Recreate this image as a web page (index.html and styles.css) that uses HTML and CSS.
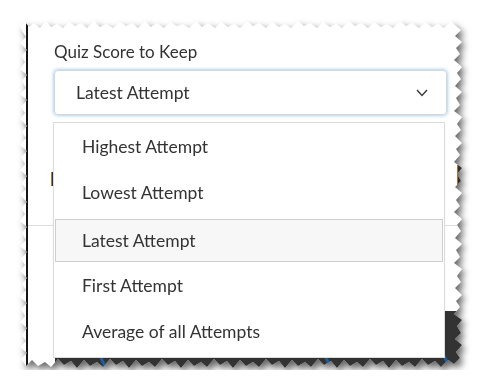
FILE: index.html
```html
<!DOCTYPE html>
<html>
<head>
<meta charset="utf-8">
<link rel="stylesheet" href="styles.css">
</head>
<body>
<div class="shadow">
  <div class="sheet">
    <div class="panel">
      <div class="field">
        <div class="label">Quiz Score to Keep</div>
        <div class="select">
          <span>Latest Attempt</span>
          <svg class="chev" width="12" height="8" viewBox="0 0 12 8"><polyline points="1,1 6,6.5 11,1" fill="none" stroke="#3a3a3a" stroke-width="1.4"/></svg>
        </div>
        <ul class="menu">
          <li>Highest Attempt</li>
          <li>Lowest Attempt</li>
          <li class="active">Latest Attempt</li>
          <li>First Attempt</li>
          <li>Average of all Attempts</li>
        </ul>
      </div>
      <div class="behind-row">
        <span class="peek-letter"></span>
        <span class="peek-button"></span>
      </div>
      <div class="sep"></div>
      <div class="spacer"></div>
      <div class="dark">
        <span class="streak s1"></span>
        <span class="streak s2"></span>
        <span class="streak s3"></span>
      </div>
    </div>
  </div>
</div>
</body>
</html>
```

FILE: styles.css
```css
html, body {
  margin: 0;
  padding: 0;
  background: #ffffff;
}
body {
  font-family: Lato, "Open Sans", sans-serif;
  color: #333333;
}
.shadow {
  padding: 20px 0 0 20px;
  width: 444px;
  filter: drop-shadow(3px 4px 3.5px rgba(0, 0, 0, 0.6));
}
.sheet {
  width: 444px;
  height: 350px;
  background: #ffffff;
  clip-path: polygon(
    0px 6px, 5px 2px, 9px 7px, 14px 3px, 20px 8px, 26px 1px, 31px 7px, 37px 4px, 43px 8px, 49px 2px, 55px 6px, 61px 3px, 67px 8px, 74px 1px, 80px 7px, 86px 4px, 93px 8px, 100px 2px, 106px 6px, 112px 3px, 118px 8px, 125px 1px, 131px 7px, 137px 3px, 144px 8px, 150px 2px, 157px 6px, 163px 4px, 169px 8px, 176px 1px, 182px 7px, 188px 3px, 195px 8px, 201px 2px, 208px 7px, 214px 4px, 220px 8px, 227px 1px, 233px 6px, 239px 3px, 246px 8px, 252px 2px, 259px 7px, 265px 4px, 271px 8px, 278px 1px, 284px 6px, 290px 3px, 297px 8px, 303px 2px, 310px 7px, 316px 4px, 322px 8px, 329px 1px, 335px 6px, 341px 3px, 348px 8px, 354px 2px, 361px 7px, 367px 4px, 373px 8px, 380px 1px, 386px 6px, 392px 3px, 399px 8px, 405px 2px, 412px 7px, 418px 4px, 424px 8px, 431px 1px, 436px 6px,
    441px 10px, 435px 16px, 442px 22px, 436px 28px, 440px 34px, 434px 40px, 442px 47px, 437px 53px, 441px 59px, 435px 66px, 442px 72px, 436px 78px, 440px 85px, 434px 91px, 442px 97px, 437px 104px, 441px 110px, 435px 116px, 442px 123px, 436px 129px, 440px 135px, 434px 142px, 442px 148px, 437px 154px, 441px 161px, 435px 167px, 442px 173px, 436px 180px, 440px 186px, 434px 192px, 442px 199px, 437px 205px, 441px 211px, 435px 218px, 442px 224px, 436px 230px, 440px 237px, 434px 243px, 442px 249px, 437px 256px, 441px 262px, 435px 268px, 442px 275px, 436px 281px, 440px 287px, 434px 294px, 442px 300px, 437px 306px, 441px 313px, 435px 319px, 442px 325px, 436px 332px, 440px 338px,
    434px 344px, 428px 340px, 421px 347px, 415px 341px, 408px 345px, 402px 339px, 395px 347px, 389px 342px, 382px 346px, 376px 340px, 369px 348px, 363px 341px, 356px 345px, 350px 339px, 343px 347px, 337px 342px, 330px 346px, 324px 340px, 317px 348px, 311px 341px, 304px 345px, 298px 339px, 291px 347px, 285px 342px, 278px 346px, 272px 340px, 265px 348px, 259px 341px, 252px 345px, 246px 339px, 239px 347px, 233px 342px, 226px 346px, 220px 340px, 213px 348px, 207px 341px, 200px 345px, 194px 339px, 187px 347px, 181px 342px, 174px 346px, 168px 340px, 161px 348px, 155px 341px, 148px 345px, 142px 339px, 135px 347px, 129px 342px, 122px 346px, 116px 340px, 109px 348px, 103px 341px, 96px 345px, 90px 339px, 83px 347px, 77px 342px, 70px 346px, 64px 340px, 57px 348px, 51px 341px, 44px 345px, 38px 339px, 31px 347px, 25px 342px, 18px 346px, 12px 340px, 6px 346px,
    1px 339px, 7px 333px, 0px 327px, 6px 321px, 2px 315px, 7px 308px, 0px 302px, 5px 296px, 1px 289px, 7px 283px, 0px 277px, 6px 270px, 2px 264px, 7px 258px, 0px 251px, 5px 245px, 1px 239px, 7px 232px, 0px 226px, 6px 220px, 2px 213px, 7px 207px, 0px 201px, 5px 194px, 1px 188px, 7px 182px, 0px 175px, 6px 169px, 2px 163px, 7px 156px, 0px 150px, 5px 144px, 1px 137px, 7px 131px, 0px 125px, 6px 118px, 2px 112px, 7px 106px, 0px 99px, 5px 93px, 1px 87px, 7px 80px, 0px 74px, 6px 68px, 2px 61px, 7px 55px, 0px 49px, 5px 42px, 1px 36px, 7px 30px, 0px 23px, 6px 17px, 2px 11px
  );
}
.panel {
  margin-left: 6px;
  height: 350px;
  border-left: 2px solid #151515;
  display: flex;
  flex-direction: column;
  box-sizing: border-box;
}
.field {
  position: relative;
  padding: 22px 0 0 26px;
}
.label {
  font-size: 17px;
  line-height: 20px;
  color: #333333;
}
.select {
  margin-top: 8px;
  width: 393px;
  height: 45px;
  box-sizing: border-box;
  border: 1px solid #d6d6d6;
  border-radius: 4px;
  box-shadow: 0 0 3px 1px rgba(110, 175, 230, 0.55);
  display: flex;
  align-items: center;
  justify-content: space-between;
  padding: 0 18px 0 21px;
  font-size: 17.5px;
  color: #333333;
}
.chev {
  display: block;
}
.menu {
  position: absolute;
  z-index: 2;
  left: 25px;
  top: 102px;
  width: 392px;
  height: 236px;
  box-sizing: border-box;
  margin: 0;
  padding: 0 1px;
  list-style: none;
  background: #ffffff;
  border: 1px solid #dcdcdc;
  box-shadow: 0 1px 2px rgba(0, 0, 0, 0.06);
}
.menu li {
  height: 46.5px;
  box-sizing: border-box;
  display: flex;
  align-items: center;
  padding-left: 27px;
  font-size: 17.5px;
  color: #333333;
}
.menu li.active {
  height: 43px;
  margin-top: 3px;
  background: #f7f7f7;
  border: 1px solid #cfcfcf;
  padding-left: 26px;
}
.behind-row {
  height: 22px;
  margin-top: 50px;
  display: flex;
  justify-content: space-between;
}
.peek-letter {
  margin-left: 23px;
  width: 2px;
  height: 14px;
  margin-top: 7px;
  background: #2b2b55;
  border-left: 1px solid #b07a30;
}
.peek-button {
  width: 6px;
  height: 22px;
  background: #2e2e2e;
  border-left: 1px solid #c0682a;
}
.sep {
  margin-top: 38px;
  height: 1px;
  background: #dedede;
}
.spacer {
  height: 85px;
}
.dark {
  position: relative;
  flex: 1;
  margin-left: 27px;
  background: #333333;
  overflow: hidden;
}
.streak {
  position: absolute;
  width: 3px;
  height: 30px;
  background: #1e5fa0;
  transform: rotate(-25deg);
}
.s1 { left: 46px; bottom: -6px; }
.s2 { left: 272px; bottom: -8px; }
.s3 { left: 390px; bottom: -6px; }
```
